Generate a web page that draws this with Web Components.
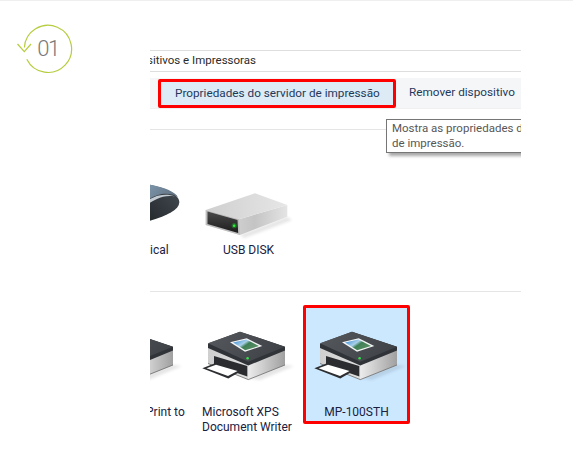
<!DOCTYPE html>
<html lang="pt">
<head>
<meta charset="utf-8">
<title>Dispositivos e Impressoras</title>
<style>
    html, body {
        margin: 0;
        background: #fff;
    }
</style>
</head>
<body>
<step-page>
    <step-badge slot="badge">01</step-badge>
    <explorer-panel>
        <span slot="title">sitivos e Impressoras</span>
        <tool-button slot="tools" marked>Propriedades do servidor de impressão</tool-button>
        <tool-button slot="tools">Remover dispositivo</tool-button>
        <tool-tip slot="tip">Mostra as propriedades d<br>de impressão.</tool-tip>

        <device-row slot="devices" style="--row-top: 25px; --row-bottom: 29px">
            <device-tile style="--label-pad: 68px"><mouse-icon slot="icon"></mouse-icon>ical</device-tile>
            <device-tile style="--label-pad: 29px"><disk-icon slot="icon"></disk-icon>USB DISK</device-tile>
        </device-row>
        <device-row slot="devices" style="--row-top: 13px; --row-bottom: 0">
            <device-tile style="--label-pad: 64px"><printer-icon slot="icon"></printer-icon>Print to</device-tile>
            <device-tile style="--label-pad: 8px"><printer-icon slot="icon"></printer-icon>Microsoft XPS<br>Document Writer</device-tile>
            <device-tile selected style="--label-align: center"><printer-icon slot="icon"></printer-icon>MP-100STH</device-tile>
        </device-row>
    </explorer-panel>
</step-page>

<script>
// small helper, every element below is just a template in a shadow root
function defineElement(name, html) {
    const template = document.createElement("template");
    template.innerHTML = html;
    customElements.define(name, class extends HTMLElement {
        constructor() {
            super();
            this.attachShadow({ mode: "open" }).append(template.content.cloneNode(true));
        }
    });
}

const uiFont = `Roboto, "Noto Sans", "Liberation Sans", sans-serif`;

defineElement("step-page", `
    <style>
        :host {
            display: grid;
            grid-template-columns: 150px 371px;
            height: 468px;
            border-top: 1px solid #efefef;
            overflow: hidden;
        }
    </style>
    <slot name="badge"></slot>
    <slot></slot>
`);

defineElement("step-badge", `
    <style>
        :host {
            display: block;
            position: relative;
            width: 60px;
            height: 60px;
            margin: 21px 0 0 15px;
        }
        svg {
            display: block;
        }
        span {
            position: absolute;
            left: 0;
            right: 0;
            top: 0;
            padding-left: 6px;
            text-align: center;
            font: 300 22px/54px Roboto, "Open Sans", sans-serif;
            letter-spacing: -1.4px;
            color: #7a7a7a;
        }
    </style>
    <svg width="60" height="60" viewBox="15 22 60 60" fill="none" stroke="#b7cc3e" stroke-width="1.2">
        <path d="M24.4 47.5 A23.6 23.6 0 1 1 26.8 59.3"/>
        <path d="M17.5 44 L24.3 51.6 L31 44"/>
    </svg>
    <span><slot></slot></span>
`);

defineElement("explorer-panel", `
    <style>
        :host {
            display: block;
            position: relative;
            margin-top: 49px;
            overflow: hidden;
            font: 12px/15px ${uiFont};
            height: 400px;
        }
        .title {
            height: 20px;
            line-height: 19px;
            font-size: 11.5px;
            text-indent: -3px;
            border-top: 1px solid #dedede;
            border-bottom: 1px solid #dedede;
            color: #2b2b2b;
            white-space: nowrap;
        }
        .tools {
            display: flex;
            height: 30px;
            margin-top: 6px;
            background: #f5f6f7;
            font-size: 11.75px;
        }
        .gap {
            height: 20px;
            border-top: 1px solid #f0f0f0;
            border-bottom: 1px solid #e5e5e5;
        }
    </style>
    <div class="title"><slot name="title"></slot></div>
    <div class="tools"><slot name="tools"></slot></div>
    <div class="gap"></div>
    <slot name="tip"></slot>
    <slot name="devices"></slot>
`);

defineElement("tool-button", `
    <style>
        :host {
            display: flex;
            align-items: center;
            box-sizing: border-box;
            height: 30px;
            padding: 0 0 1px 13px;
            color: #1e395b;
            white-space: nowrap;
        }
        :host([marked]) {
            width: 238px;
            height: 29px;
            margin: 1px 0 0 8px;
            padding: 0 0 0 14px;
            border: 3px solid #f00;
            border-radius: 2px;
            background: #dcebf5;
        }
    </style>
    <slot></slot>
`);

defineElement("tool-tip", `
    <style>
        :host {
            position: absolute;
            left: 236px;
            top: 69px;
            box-sizing: border-box;
            width: 200px;
            height: 34px;
            padding: 1px 0 0 5px;
            border: 1px solid #767676;
            background: #fff;
            color: #575757;
            font-size: 11.5px;
            line-height: 15px;
            white-space: nowrap;
            box-shadow: 3px 3px 3px rgba(0, 0, 0, 0.35);
            z-index: 1;
        }
    </style>
    <slot></slot>
`);

defineElement("device-row", `
    <style>
        :host {
            display: flex;
            align-items: flex-start;
            gap: 5px;
            margin-left: -71px;
            padding: var(--row-top) 0 var(--row-bottom) 0;
            width: 442px;
            border-bottom: 1px solid #e5e5e5;
        }
        :host(:last-of-type) {
            border-bottom: 0;
        }
    </style>
    <slot></slot>
`);

defineElement("device-tile", `
    <style>
        :host {
            display: block;
            box-sizing: border-box;
            width: 107px;
            flex: none;
            border: 3px solid transparent;
            padding: 22px 0 1px;
            color: #1a2140;
            line-height: 15px;
            white-space: nowrap;
        }
        :host([selected]) {
            border-color: #f00;
            border-radius: 2px;
            background: #cce8ff;
        }
        .label {
            padding-left: var(--label-pad, 0);
            text-align: var(--label-align, left);
        }
    </style>
    <slot name="icon"></slot>
    <div class="label"><slot></slot></div>
`);

defineElement("printer-icon", `
    <style>
        :host { display: block; height: 72px; margin: 0 0 3px 6px; }
        svg { display: block; overflow: visible; }
    </style>
    <svg width="90" height="60" viewBox="0 0 90 60">
        <defs>
            <linearGradient id="side" x1="0" x2="1" y1="0" y2="0">
                <stop offset="0" stop-color="#ececec"/>
                <stop offset="0.5" stop-color="#c6c6c6"/>
                <stop offset="1" stop-color="#a0a0a0"/>
            </linearGradient>
            <linearGradient id="front" x1="0" x2="1" y1="0" y2="0">
                <stop offset="0" stop-color="#cfcfcf"/>
                <stop offset="1" stop-color="#ededed"/>
            </linearGradient>
            <linearGradient id="lid" x1="0" x2="1" y1="0" y2="0.3">
                <stop offset="0" stop-color="#55595d"/>
                <stop offset="1" stop-color="#404448"/>
            </linearGradient>
            <linearGradient id="photo" x1="0" x2="1" y1="0" y2="0.6">
                <stop offset="0" stop-color="#2f86d8"/>
                <stop offset="0.45" stop-color="#a9cfe6"/>
                <stop offset="0.6" stop-color="#3f7f55"/>
                <stop offset="1" stop-color="#5a8f62"/>
            </linearGradient>
            <filter id="soft"><feGaussianBlur stdDeviation="1.6"/></filter>
        </defs>
        <path d="M48 48 L84 35 L94 36 L60 50 Z" fill="#000" opacity="0.1" filter="url(#soft)"/>
        <path d="M8 17 L8 33.5 L48.3 49.6 L85 35 L85 18 L48 33 Z" fill="url(#front)"/>
        <path d="M48.3 34 L85 19.5 L85 35 L48.3 49.6 Z" fill="url(#side)"/>
        <path d="M8 33.5 L48.3 49.6 L85 35" fill="none" stroke="#6a6a6a" stroke-width="0.8"/>
        <path d="M8 13.5 L40 1.7 L85 16.7 L85 20.5 L48.3 35.5 L8 18 Z" fill="#303337"/>
        <path d="M8 13.3 L40 1.7 L85 16.7 L48.3 31.7 Z" fill="url(#lid)"/>
        <path d="M30 12.3 L46.7 8.3 L62.3 16 L45 21.7 Z" fill="#f4f6f8"/>
        <path d="M33 12.6 L46.4 9.6 L59 16 L45.2 20.3 Z" fill="url(#photo)"/>
        <circle cx="47.6" cy="28.3" r="1.3" fill="#35e04a"/>
        <path d="M14 26 L47.3 36 L47.3 46.5 L14 35 Z" fill="#2a2c2f"/>
        <path d="M2.3 38.3 L15 33.3 L41.7 40.7 L28.3 48.4 Z" fill="#2c2e31"/>
        <path d="M6.5 38.3 L16 34.8 L37.5 41 L28 46 Z" fill="#fff"/>
    </svg>
`);

defineElement("disk-icon", `
    <style>
        :host { display: block; height: 60px; margin: 0 0 3px 6px; }
        svg { display: block; overflow: visible; }
    </style>
    <svg width="90" height="60" viewBox="0 -10 90 60">
        <defs>
            <linearGradient id="disk-top" x1="0" x2="1" y1="0" y2="0">
                <stop offset="0" stop-color="#cfcfcf"/>
                <stop offset="1" stop-color="#e6e6e6"/>
            </linearGradient>
            <linearGradient id="disk-side" x1="0" x2="1" y1="0" y2="0">
                <stop offset="0" stop-color="#e2e2e2"/>
                <stop offset="0.6" stop-color="#c4c4c4"/>
                <stop offset="1" stop-color="#e4e4e4"/>
            </linearGradient>
            <linearGradient id="disk-face" x1="0" x2="0" y1="0" y2="1">
                <stop offset="0" stop-color="#4a4a4a"/>
                <stop offset="1" stop-color="#1c1c1c"/>
            </linearGradient>
            <filter id="disk-soft"><feGaussianBlur stdDeviation="1.5"/></filter>
        </defs>
        <path d="M40 45 L87 27 L92 30 L44 48 Z" fill="#000" opacity="0.1" filter="url(#disk-soft)"/>
        <path d="M5.7 20 L39 29.3 L87.3 15 L87.3 26.7 L40 45 L5.7 35 Z" fill="url(#disk-side)"/>
        <path d="M5.7 20 L55 3.3 L87.3 15 L39 29.3 Z" fill="url(#disk-top)"/>
        <path d="M5.7 20 L39 29.3 L40 45 L5.7 35 Z" fill="#bdbdbd"/>
        <path d="M7.5 21.5 L37.5 30 L38.2 43 L7.5 34 Z" fill="url(#disk-face)"/>
        <circle cx="34.2" cy="35.7" r="2.6" fill="#1cf02c" opacity="0.3"/>
        <circle cx="34.2" cy="35.7" r="1.3" fill="#2cf03a"/>
    </svg>
`);

defineElement("mouse-icon", `
    <style>
        :host { display: block; height: 60px; margin: 0 0 3px 6px; }
        svg { display: block; overflow: visible; }
    </style>
    <svg width="100" height="60" viewBox="0 0 100 60">
        <defs>
            <linearGradient id="mouse-top" x1="0" x2="1" y1="0" y2="0.6">
                <stop offset="0" stop-color="#86a2ba"/>
                <stop offset="1" stop-color="#5f6f7d"/>
            </linearGradient>
            <linearGradient id="mouse-low" x1="0" x2="1" y1="1" y2="0">
                <stop offset="0" stop-color="#1d2226"/>
                <stop offset="1" stop-color="#474e55"/>
            </linearGradient>
        </defs>
        <path d="M50 3 C72 5 91 13 91.3 22 C91.5 31 74 38 50 44 Z" fill="url(#mouse-low)"/>
        <path d="M50 3 C70 5 86 10 90 17 C84 13 76 13 70 15 C63 17 56 22 50 26 Z" fill="url(#mouse-top)"/>
        <path d="M50 27 C57 22 64 17 71 15.5 C76 14.5 82 14.5 87 16.5 C80 15.5 74 16.5 69 19 C62 22 56 27 50 32 Z" fill="#c3ccd3"/>
    </svg>
`);
</script>
</body>
</html>
